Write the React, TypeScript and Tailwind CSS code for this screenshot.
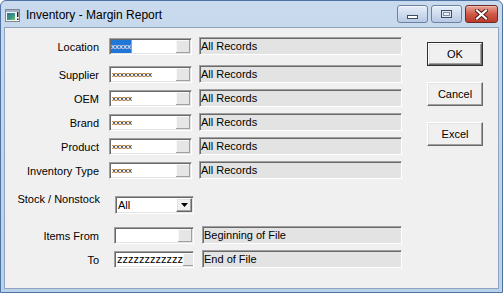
import React from "react";

const sunken =
  "border border-t-[#a0a0a0] border-l-[#a0a0a0] border-r-white border-b-white shadow-[inset_1px_1px_0_#696969,inset_-1px_-1px_0_#e3e3e3]";
const raised =
  "border border-t-white border-l-white border-r-[#696969] border-b-[#696969] shadow-[inset_-1px_-1px_0_#a0a0a0,inset_1px_1px_0_#e3e3e3]";

function MiniBtn() {
  return (
    <div className="ml-auto shrink-0 w-[14px] h-[13px] bg-[#e6e6e6] border-r border-b border-[#a0a0a0] shadow-[inset_1px_1px_0_#f8f8f8]" />
  );
}

function CodeBox({ text, selected }: { text: string; selected?: boolean }) {
  return (
    <div className={`${sunken} bg-white h-[17px] w-[83px] flex items-center pl-[1px] pr-[1px] overflow-hidden`}>
      {selected ? (
        <div className="flex h-[13px] items-center">
          <span className="bg-[#1f77d8] text-white text-[8px] leading-[13px] h-[13px]">{text}</span>
          <span className="w-[1px] h-[13px] bg-[#ff8a00]" />
        </div>
      ) : (
        <span className="text-[8px] leading-[13px] text-black pl-[1px]">{text}</span>
      )}
      <MiniBtn />
    </div>
  );
}

function Desc({ text, wide = true }: { text: string; wide?: boolean }) {
  return (
    <div
      className={`${sunken} bg-[#e3e3e3] h-[18px] flex items-center pl-[1px] text-[11px] text-black ${
        wide ? "w-[203px]" : "w-[200px]"
      }`}
    >
      {text}
    </div>
  );
}

function Row({
  label,
  code,
  selected,
  className = "",
}: {
  label: string;
  code: string;
  selected?: boolean;
  className?: string;
}) {
  return (
    <div className={`flex items-center h-[18px] ${className}`}>
      <div className="w-[96px] text-right text-[11px] leading-[18px] pt-[1px]">{label}</div>
      <div className="ml-[10px]">
        <CodeBox text={code} selected={selected} />
      </div>
      <div className="ml-[7px]">
        <Desc text="All Records" />
      </div>
    </div>
  );
}

function Button({ label, def }: { label: string; def?: boolean }) {
  if (def) {
    return (
      <div className="w-[56px] h-[24px] border border-[#303030]">
        <div className={`${raised} w-full h-full bg-[#f0f0f0] flex items-center justify-center text-[11px] text-black`}>
          {label}
        </div>
      </div>
    );
  }
  return (
    <div className={`${raised} w-[56px] h-[24px] bg-[#f0f0f0] flex items-center justify-center text-[11px] text-black`}>
      {label}
    </div>
  );
}

function AppIcon() {
  return (
    <svg width="15" height="13" viewBox="0 0 15 13">
      <defs>
        <linearGradient id="ig" x1="0" y1="0" x2="1" y2="1">
          <stop offset="0" stopColor="#2e6f9c" />
          <stop offset="0.6" stopColor="#3f9a86" />
          <stop offset="1" stopColor="#86c15a" />
        </linearGradient>
      </defs>
      <rect x="0.5" y="0.5" width="14" height="12" fill="#f4f6f8" stroke="#7d8792" />
      <rect x="1" y="1" width="13" height="2" fill="#9fb2c6" />
      <rect x="2" y="4" width="8" height="7" fill="url(#ig)" />
      <rect x="12" y="3" width="1.5" height="5" fill="#202020" />
      <rect x="12" y="9.5" width="1.5" height="1.5" fill="#202020" />
    </svg>
  );
}

export default function App() {
  return (
    <div className="w-[503px] h-[293px] font-['Liberation_Sans',Arial,sans-serif] text-black">
      <div className="w-full h-full flex flex-col border border-[#4d74a3] rounded-t-[6px] bg-linear-to-b from-[#c9daee] to-[#b9d1ea] overflow-hidden">
        <div className="h-[26px] flex items-center shrink-0">
          <div className="ml-[4px] mt-[2px]">
            <AppIcon />
          </div>
          <div className="ml-[6px] text-[12px] text-black mt-[1px]">Inventory - Margin Report</div>
          <div className="ml-auto mr-[4px] flex items-start self-start mt-[4px] gap-[3px]">
            <div className="w-[31px] h-[18px] rounded-[3px] border border-[#6c82a0] bg-linear-to-b from-[#e6eef9] via-[#cfdcee] to-[#b6c9e3] flex items-center justify-center shadow-[inset_0_1px_0_#f4f8fd]">
              <div className="w-[11px] h-[4px] bg-white border border-[#3f4d62] mt-[5px]" />
            </div>
            <div className="w-[31px] h-[18px] rounded-[3px] border border-[#6c82a0] bg-linear-to-b from-[#e6eef9] via-[#cfdcee] to-[#b6c9e3] flex items-center justify-center shadow-[inset_0_1px_0_#f4f8fd]">
              <div className="w-[11px] h-[8px] border border-[#3f4d62] bg-[#dfe8f4] flex items-center justify-center">
                <div className="w-[7px] h-[4px] border border-[#7f90a8] bg-[#eef3fa]" />
              </div>
            </div>
            <div className="w-[33px] h-[18px] rounded-[3px] border border-[#6b2b26] bg-linear-to-b from-[#e8a397] via-[#cf5a48] to-[#bb3a2a] flex items-center justify-center shadow-[inset_0_1px_0_#f0b9ae]">
              <svg width="13" height="11" viewBox="0 0 13 11">
                <path d="M2 1.5 L11 9.5 M11 1.5 L2 9.5" stroke="#4a1713" strokeWidth="4" strokeLinecap="square" />
                <path d="M2 1.5 L11 9.5 M11 1.5 L2 9.5" stroke="#ffffff" strokeWidth="2.2" strokeLinecap="square" />
              </svg>
            </div>
          </div>
        </div>
        <div className="flex-1 mx-[3px] mb-[3px] bg-[#f0f0f0] flex border border-[#8ea3bd]">
          <div className="w-[398px] shrink-0 flex flex-col pt-[9px] -ml-[1px]">
            <Row label="Location" code="xxxxx" selected />
            <Row label="Supplier" code="xxxxxxxxxx" className="mt-[10px]" />
            <Row label="OEM" code="xxxxx" className="mt-[6px]" />
            <Row label="Brand" code="xxxxx" className="mt-[6px]" />
            <Row label="Product" code="xxxxx" className="mt-[6px]" />
            <Row label="Inventory Type" code="xxxxx" className="mt-[6px]" />

            <div className="flex items-start mt-[13px] h-[22px]">
              <div className="w-[96px] text-right text-[11px] leading-[14px]">Stock / Nonstock</div>
              <div className={`${sunken} ml-[15px] mt-[4px] w-[79px] h-[18px] bg-white flex items-center pl-[2px] pr-[1px]`}>
                <span className="text-[11px]">All</span>
                <div className={`${raised} ml-auto w-[16px] h-[14px] bg-[#f0f0f0] flex items-center justify-center`}>
                  <svg width="7" height="4" viewBox="0 0 7 4">
                    <path d="M0 0 H7 L3.5 4 Z" fill="#000" />
                  </svg>
                </div>
              </div>
            </div>

            <div className="flex items-center h-[18px] mt-[12px]">
              <div className="w-[96px] text-right text-[11px] leading-[18px] pt-[1px]">Items From</div>
              <div className="ml-[15px]">
                <div className={`${sunken} bg-white h-[17px] w-[80px] flex items-center pl-[1px] pr-[1px]`}>
                  <MiniBtn />
                </div>
              </div>
              <div className="ml-[8px]">
                <Desc text="Beginning of File" wide={false} />
              </div>
            </div>

            <div className="flex items-center h-[18px] mt-[6px]">
              <div className="w-[96px] text-right text-[11px] leading-[18px] pt-[1px]">To</div>
              <div className="ml-[15px]">
                <div className={`${sunken} bg-white h-[17px] w-[80px] flex items-center pl-[2px] pr-[1px] overflow-hidden`}>
                  <span className="text-[11px] leading-[13px] whitespace-nowrap">zzzzzzzzzzzz</span>
                  <MiniBtn />
                </div>
              </div>
              <div className="ml-[8px]">
                <Desc text="End of File" wide={false} />
              </div>
            </div>
          </div>
          <div className="ml-[25px] flex flex-col pt-[14px] gap-[16px]">
            <Button label="OK" def />
            <Button label="Cancel" />
            <Button label="Excel" />
          </div>
        </div>
      </div>
    </div>
  );
}
